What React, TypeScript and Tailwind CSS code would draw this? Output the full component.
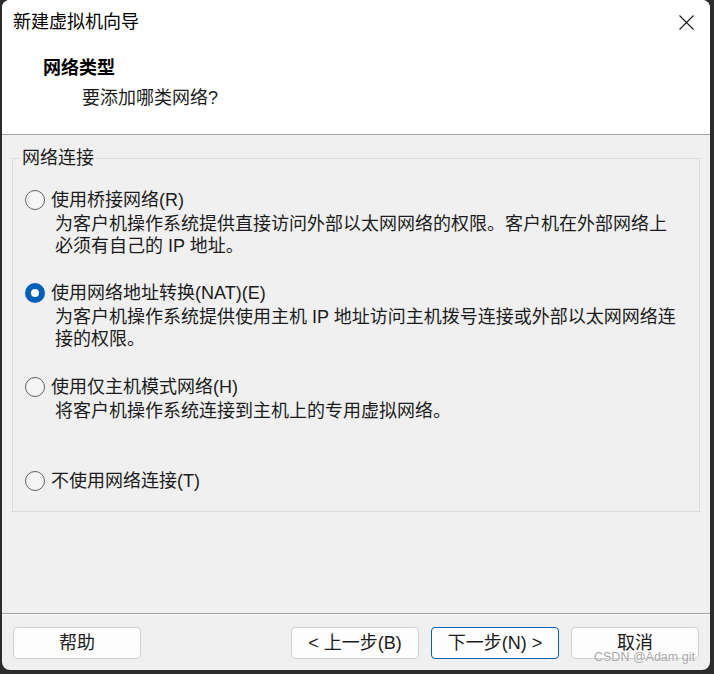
const font = { fontFamily: '"Liberation Sans", "Noto Sans CJK SC", sans-serif' };

function Radio({ checked }: { checked?: boolean }) {
  return checked ? (
    <span className="w-[20px] h-[20px] rounded-full bg-[#005fb8] flex items-center justify-center shrink-0">
      <span className="w-[8px] h-[8px] rounded-full bg-white" />
    </span>
  ) : (
    <span className="w-[20px] h-[20px] rounded-full border border-[#616161] bg-[#f5f5f5] shrink-0" />
  );
}

function Option({ label, desc, checked, className }: { label: string; desc?: string[]; checked?: boolean; className?: string }) {
  return (
    <div className={className}>
      <div className="flex items-center gap-[6px] pl-[12px] h-[24px]">
        <Radio checked={checked} />
        <span className="text-[18px] leading-[24px] text-[#1b1b1b]">{label}</span>
      </div>
      {desc && (
        <div className="pl-[42px] mt-[2px] text-[18px] leading-[21.5px] text-[#1b1b1b]">
          {desc.map((d) => (
            <div key={d}>{d}</div>
          ))}
        </div>
      )}
    </div>
  );
}

function Button({ children, primary }: { children: React.ReactNode; primary?: boolean }) {
  return (
    <button
      className={`w-[128px] h-[32px] rounded-[4px] border bg-[#fdfdfd] text-[18px] text-[#1b1b1b] flex items-center justify-center ${
        primary ? "border-[#005fb8]" : "border-[#d0d0d0]"
      }`}
    >
      {children}
    </button>
  );
}

export default function App() {
  return (
    <div className="w-[714px] h-[674px] bg-[#2c2c2c] pl-[2px] pr-[4px] relative" style={font}>
      <div className="h-[670px] rounded-[8px] overflow-hidden bg-[#f0f0f0] flex flex-col">
        <div className="h-[135px] bg-white border-b border-[#a0a0a0]">
          <div className="h-[45px] flex items-center justify-between pl-[11px] pr-[16px]">
            <span className="text-[18px] text-black">新建虚拟机向导</span>
            <svg width="15" height="15" viewBox="0 0 15 15">
              <path d="M0.5 0.5 L14.5 14.5 M14.5 0.5 L0.5 14.5" stroke="#1a1a1a" strokeWidth="1.1" fill="none" />
            </svg>
          </div>
          <div className="mt-[11px] pl-[41px] text-[18px] leading-[24px] font-bold text-black">网络类型</div>
          <div className="mt-[6px] pl-[80px] text-[18px] leading-[24px] text-[#1b1b1b]">要添加哪类网络?</div>
        </div>
        <div className="flex-1">
          <fieldset className="mx-[10px] mt-[11px] h-[366px] border border-[#dcdcdc]">
            <legend className="ml-[7px] px-[2px] text-[18px] leading-[24px] text-[#1b1b1b]">网络连接</legend>
            <Option
              className="pt-[18px]"
              label="使用桥接网络(R)"
              desc={["为客户机操作系统提供直接访问外部以太网网络的权限。客户机在外部网络上", "必须有自己的 IP 地址。"]}
            />
            <Option
              className="mt-[24px]"
              checked
              label="使用网络地址转换(NAT)(E)"
              desc={["为客户机操作系统提供使用主机 IP 地址访问主机拨号连接或外部以太网网络连", "接的权限。"]}
            />
            <Option className="mt-[25px]" label="使用仅主机模式网络(H)" desc={["将客户机操作系统连接到主机上的专用虚拟网络。"]} />
            <Option className="mt-[46px]" label="不使用网络连接(T)" />
          </fieldset>
        </div>
        <div className="h-[57px] border-t border-[#a0a0a0] [box-shadow:inset_0_1px_0_#ffffff] flex items-start pt-[13px] px-[11px]">
          <Button>帮助</Button>
          <div className="ml-auto flex gap-[12px]">
            <Button>&lt; 上一步(B)</Button>
            <Button primary>下一步(N) &gt;</Button>
            <Button>取消</Button>
          </div>
        </div>
      </div>
      <span className="absolute left-[594px] top-[648px] text-[12.5px] leading-[18px] text-[#a8a8a8] [text-shadow:0_0_1px_#ffffff]">
        CSDN @Adam git
      </span>
    </div>
  );
}
